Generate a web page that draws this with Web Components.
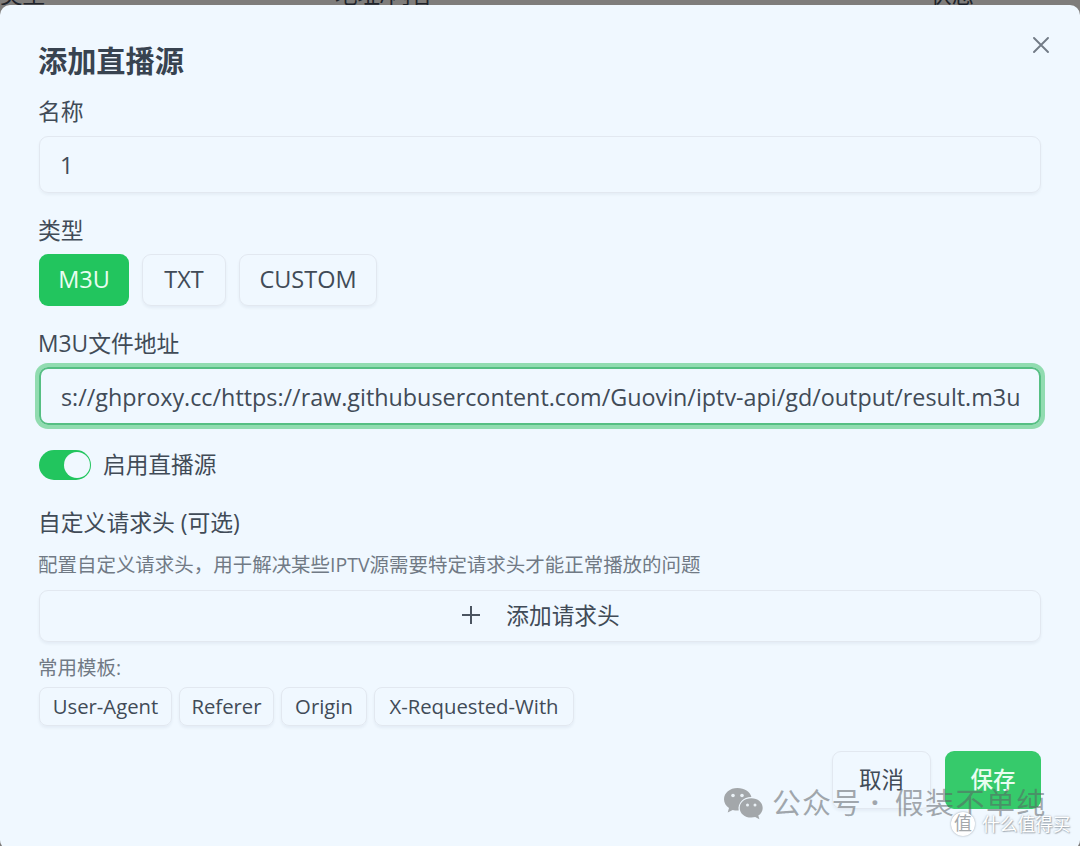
<!DOCTYPE html>
<html lang="zh-CN">
<head>
<meta charset="UTF-8">
<title>添加直播源</title>
<style>
    body {
        margin: 0;
        width: 1080px;
        height: 846px;
        overflow: hidden;
        background: #7f7d7b;
        color: #414b57;
        font-family: "Open Sans", "Noto Sans CJK SC", sans-serif;
    }
</style>
</head>
<body>
<source-page></source-page>

<script>
class TableHead extends HTMLElement {
    constructor() {
        super();
        this.attachShadow({ mode: 'open' }).innerHTML = `
            <style>
                :host {
                    display: grid;
                    grid-template-columns: 335px 594px 1fr;
                    grid-template-rows: 5px;
                    align-items: end;
                    height: 5px;
                    overflow: hidden;
                    color: #20242b;
                    font-size: 22.5px;
                    line-height: 24px;
                }
                span { margin-bottom: -2px; }
            </style>
            <span>类型</span><span>地址/内容</span><span>状态</span>
        `;
    }
}

class AppDialog extends HTMLElement {
    constructor() {
        super();
        this.attachShadow({ mode: 'open' }).innerHTML = `
            <style>
                :host {
                    display: block;
                    box-sizing: border-box;
                    height: 845px;
                    padding: 30px 39px 0 39px;
                    border-radius: 10px;
                    background: #f0f8ff;
                }
                header {
                    display: flex;
                    justify-content: space-between;
                    height: 61px;
                }
                h2 {
                    margin: 0 0 0 -1px;
                    font-size: 29.2px;
                    line-height: 52px;
                    font-weight: 700;
                    color: #384350;
                }
                svg {
                    display: block;
                    margin: 2px -8px 0 0;
                    width: 16px;
                    height: 16px;
                }
            </style>
            <header>
                <h2><slot name="title"></slot></h2>
                <svg viewBox="0 0 16 16" fill="none" stroke="#727b86" stroke-width="1.9" stroke-linecap="round">
                    <path d="M1 1l14 14M15 1L1 15"/>
                </svg>
            </header>
            <slot></slot>
        `;
    }
}

class FormField extends HTMLElement {
    constructor() {
        super();
        this.attachShadow({ mode: 'open' }).innerHTML = `
            <style>
                :host { display: block; }
                .label {
                    height: 30px;
                    margin-left: -1px;
                    line-height: 31px;
                    font-size: 22.8px;
                    white-space: nowrap;
                }
                .hint {
                    height: 26px;
                    margin-left: -1px;
                    line-height: 26px;
                    font-size: 19.48px;
                    color: #717a85;
                    white-space: nowrap;
                }
                .label + .hint { margin-top: 15px; }
                .body { margin-top: var(--gap, 10px); }
            </style>
            ${this.hasAttribute('label') ? `<div class="label">${this.getAttribute('label')}</div>` : ''}
            ${this.hasAttribute('hint') ? `<div class="hint">${this.getAttribute('hint')}</div>` : ''}
            <div class="body"><slot></slot></div>
        `;
    }
}

class TextInput extends HTMLElement {
    constructor() {
        super();
        this.attachShadow({ mode: 'open' }).innerHTML = `
            <style>
                :host {
                    display: flex;
                    align-items: center;
                    box-sizing: border-box;
                    height: 57px;
                    padding: 0 20px;
                    border: 1px solid #e2e8f0;
                    border-radius: 9px;
                    box-shadow: 0 2px 3px rgba(30, 50, 80, 0.05);
                    font-size: 23.34px;
                    white-space: nowrap;
                }
                :host([focused]) {
                    height: 58px;
                    padding-top: 2px;
                    border: 2px solid #56bf83;
                    box-shadow: 0 0 0 4px #91dcb0;
                }
            </style>
            <slot></slot>
        `;
    }
}

class AppButton extends HTMLElement {
    constructor() {
        super();
        this.attachShadow({ mode: 'open' }).innerHTML = `
            <style>
                :host {
                    display: flex;
                    align-items: center;
                    justify-content: center;
                    box-sizing: border-box;
                    height: 52px;
                    padding-bottom: 2px;
                    border: 1px solid #e2e8f0;
                    border-radius: 9px;
                    box-shadow: 0 2px 3px rgba(30, 50, 80, 0.06);
                    font-size: 23.5px;
                    white-space: nowrap;
                }
                :host([primary]) {
                    border: 0;
                    background: #22c55e;
                    color: #e9fdf1;
                    box-shadow: none;
                    font-weight: 500;
                }
                :host([small]) {
                    height: 39px;
                    padding-bottom: 1px;
                    border-radius: 8px;
                    font-size: 20.3px;
                }
                :host([large]) {
                    height: 58px;
                    padding-bottom: 3px;
                    font-size: 22.5px;
                }
                :host([large][primary]) {
                    background: #36ca6b;
                }
            </style>
            <slot></slot>
        `;
    }
}

class ToggleSwitch extends HTMLElement {
    constructor() {
        super();
        this.attachShadow({ mode: 'open' }).innerHTML = `
            <style>
                :host {
                    display: flex;
                    align-items: center;
                    gap: 12px;
                    height: 30px;
                    font-size: 22.7px;
                    line-height: 30px;
                }
                .track {
                    display: flex;
                    justify-content: flex-end;
                    box-sizing: border-box;
                    width: 52px;
                    height: 30px;
                    padding: 2px 1.5px;
                    border-radius: 15px;
                    background: #22c55e;
                }
                .thumb {
                    width: 26px;
                    height: 26px;
                    border-radius: 50%;
                    background: #f0f8ff;
                }
            </style>
            <div class="track"><div class="thumb"></div></div>
            <slot></slot>
        `;
    }
}

class WaterMark extends HTMLElement {
    constructor() {
        super();
        this.attachShadow({ mode: 'open' }).innerHTML = `
            <style>
                :host { display: block; }
                .account, .site {
                    position: absolute;
                    display: flex;
                    align-items: center;
                    white-space: nowrap;
                }
                .account {
                    left: 723px;
                    top: 782px;
                    height: 38px;
                    gap: 9px;
                    font-size: 29px;
                    color: rgba(90, 95, 100, 0.53);
                }
                .account svg { width: 41px; height: 34px; margin-top: 4px; }
                .account .id { margin-left: -1px; letter-spacing: 0.9px; }
                .account .name { margin-left: 8px; letter-spacing: 1.4px; }
                .account .dot { width: 7px; text-align: center; font-weight: 700; }
                .site {
                    left: 951px;
                    top: 811px;
                    height: 26px;
                    gap: 7px;
                    font-size: 17.7px;
                    color: #fff;
                    text-shadow: 0 0 2px rgba(90, 100, 110, 0.6), 1px 1px 1px rgba(90, 100, 110, 0.4);
                }
                .seal {
                    width: 24px;
                    height: 24px;
                    border-radius: 50%;
                    background: #fff;
                    box-shadow: 0 0 2px rgba(90, 100, 110, 0.6);
                    color: #a4a8ab;
                    text-align: center;
                    line-height: 23px;
                    font-size: 18px;
                    text-shadow: none;
                }
                .site .brand { margin-top: -2px; }
            </style>
            <div class="account">
                <svg viewBox="0 0 41 34">
                    <path fill="#a3a7aa" d="M14.500 2C6.800 2 1 6.900 1 13.200c0 3.600 1.900 6.700 5 8.800l-1.300 4.400 5-2.500c1.600.4 3 .6 4.800.6h1.200c-1.300-7.600 4.900-13.600 12.700-13.500C27 5.500 21.500 2 14.500 2z"/>
                    <path fill="#a3a7aa" d="M28.300 12.300c-6.700 0-11.600 4.200-11.600 9.600s4.900 9.700 11.600 9.700c1.400 0 2.700-.2 3.900-.5l4.200 2.100-1.100-3.600c2.700-1.800 4.400-4.500 4.400-7.700 0-5.400-4.900-9.600-11.400-9.600z"/>
                    <g fill="#eaf1f6">
                        <circle cx="10" cy="9.500" r="1.800"/><circle cx="19" cy="9.500" r="1.800"/>
                        <circle cx="24.500" cy="19" r="1.500"/><circle cx="32" cy="19" r="1.500"/>
                    </g>
                </svg>
                <span class="id">公众号</span><span class="dot">·</span><span class="name">假装不单纯</span>
            </div>
            <div class="site"><span class="seal">值</span><span class="brand">什么值得买</span></div>
        `;
    }
}

class SourcePage extends HTMLElement {
    constructor() {
        super();
        this.attachShadow({ mode: 'open' }).innerHTML = `
            <style>
                :host { display: block; }
                .row { display: flex; }
                .name { --gap: 10px; }
                .type { margin-top: 22px; --gap: 9px; }
                .type .row { gap: 13px; }
                .url { margin-top: 22px; --gap: 9px; }
                toggle-switch { margin-top: 25px; }
                .headers { margin-top: 27px; --gap: 12px; }
                .add { gap: 26px; padding-left: 2px; padding-bottom: 3px; font-size: 22.7px; }
                .add svg { width: 18px; height: 18px; }
                .templates { margin-top: 13px; --gap: 6px; }
                .templates .row { gap: 7px; }
                .footer { display: flex; justify-content: flex-end; gap: 14px; margin-top: 25px; }
            </style>
            <table-head></table-head>
            <app-dialog>
                <span slot="title">添加直播源</span>
                <form-field class="name" label="名称">
                    <text-input>1</text-input>
                </form-field>
                <form-field class="type" label="类型">
                    <div class="row">
                        <app-button primary style="width: 90px">M3U</app-button>
                        <app-button style="width: 84px">TXT</app-button>
                        <app-button style="width: 138px">CUSTOM</app-button>
                    </div>
                </form-field>
                <form-field class="url" label="M3U文件地址">
                    <text-input focused>s://ghproxy.cc/https://raw.githubusercontent.com/Guovin/iptv-api/gd/output/result.m3u</text-input>
                </form-field>
                <toggle-switch>启用直播源</toggle-switch>
                <form-field class="headers" label="自定义请求头 (可选)"
                    hint="配置自定义请求头，用于解决某些IPTV源需要特定请求头才能正常播放的问题">
                    <app-button class="add">
                        <svg viewBox="0 0 18 18" stroke="#4b5561" stroke-width="2"><path d="M9 0v18M0 9h18"/></svg>
                        <span>添加请求头</span>
                    </app-button>
                </form-field>
                <form-field class="templates" hint="常用模板:">
                    <div class="row">
                        <app-button small style="width: 133px">User-Agent</app-button>
                        <app-button small style="width: 95px">Referer</app-button>
                        <app-button small style="width: 86px">Origin</app-button>
                        <app-button small style="width: 200px">X-Requested-With</app-button>
                    </div>
                </form-field>
                <div class="footer">
                    <app-button large style="width: 99px">取消</app-button>
                    <app-button large primary style="width: 96px">保存</app-button>
                </div>
            </app-dialog>
            <water-mark></water-mark>
        `;
    }
}

customElements.define('table-head', TableHead);
customElements.define('app-dialog', AppDialog);
customElements.define('form-field', FormField);
customElements.define('text-input', TextInput);
customElements.define('app-button', AppButton);
customElements.define('toggle-switch', ToggleSwitch);
customElements.define('water-mark', WaterMark);
customElements.define('source-page', SourcePage);
</script>
</body>
</html>
